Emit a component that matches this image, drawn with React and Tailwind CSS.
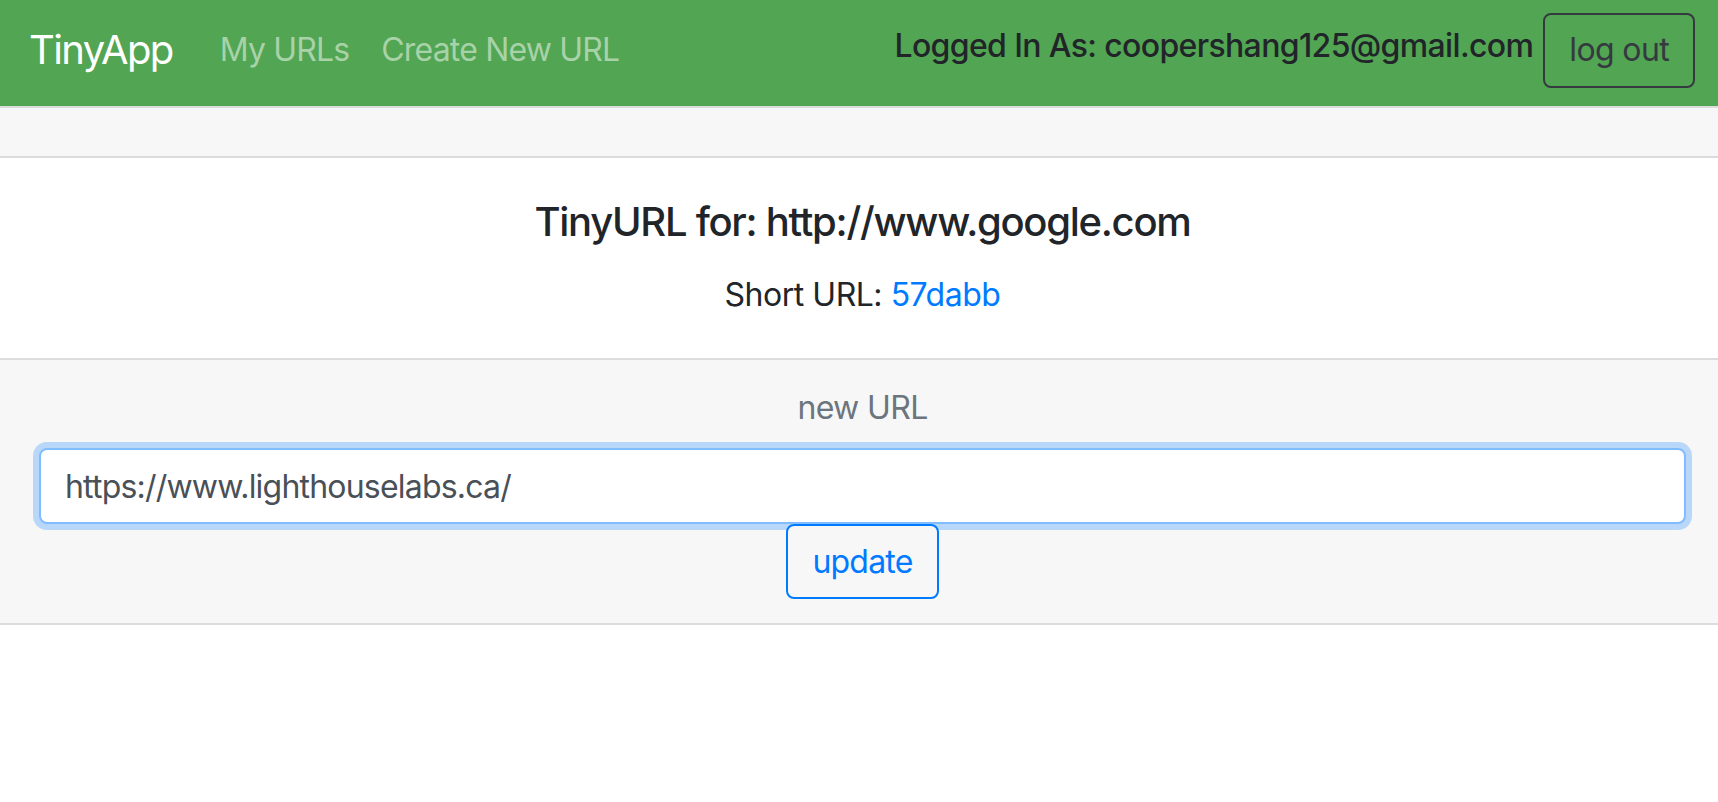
import { useState } from "react";

export default function App() {
  const [longUrl, setLongUrl] = useState("https://www.lighthouselabs.ca/");

  return (
    <div className="min-h-screen bg-white font-['Inter','Liberation_Sans',sans-serif] text-[#212529]">
      {/* top nav */}
      <nav className="h-[106px] bg-[#52a552] flex items-center pb-[6px] pl-[29px] pr-[23px]">
        <a href="#" className="text-[40px] leading-[60px] tracking-[-0.04em] text-white mr-[31px]">
          TinyApp
        </a>
        <a href="#" className="text-[32px] leading-[48px] tracking-[-0.026em] text-[#a8d2a8] px-[16px]">
          My URLs
        </a>
        <a href="#" className="text-[32px] leading-[48px] tracking-[-0.026em] text-[#a8d2a8] px-[16px]">
          Create New URL
        </a>

        <div className="ml-auto flex items-center">
          <h6 className="text-[32px] leading-[38px] tracking-[-0.02em] font-medium mb-[8px] mr-[10px]">
            Logged In As: coopershang125@gmail.com
          </h6>
          <button className="h-[75px] px-[24px] border-2 border-[#343a40] rounded-[8px] text-[32px] leading-[48px] tracking-[-0.02em] text-[#343a40]">
            log out
          </button>
        </div>
      </nav>

      {/* card */}
      <div className="border-y-2 border-[#dcdcdc]">
        <div className="h-[50px] bg-[#f7f7f7] border-b-2 border-[#dcdcdc]"></div>

        <div className="pt-[40px] pb-[39px] pl-[39px] pr-[32px] text-center">
          <h5 className="text-[40px] leading-[48px] tracking-[-0.032em] font-medium">
            TinyURL for: http://www.google.com
          </h5>
          <p className="mt-[25px] text-[32px] leading-[48px] tracking-[-0.015em]">
            Short URL:{" "}
            <a href="#" className="text-[#007bff]">
              57dabb
            </a>
          </p>
        </div>

        <form
          onSubmit={(e) => e.preventDefault()}
          className="bg-[#f7f7f7] border-t-2 border-[#dcdcdc] pt-[24px] pb-[24px] pl-[39px] pr-[32px] flex flex-col items-center"
        >
          <label className="text-[32px] leading-[48px] tracking-[-0.02em] text-[#6c757d] mb-[16px]">
            new URL
          </label>
          <input
            type="text"
            value={longUrl}
            onChange={(e) => setLongUrl(e.target.value)}
            className="w-full h-[76px] px-[24px] bg-white border-2 border-[#80bdff] rounded-[8px] text-[32px] tracking-[-0.025em] text-[#495057] outline-none shadow-[0_0_0_6px_rgba(0,123,255,0.25)]"
          />
          <button
            type="submit"
            className="relative z-10 h-[75px] px-[24px] bg-[#f7f7f7] border-2 border-[#007bff] rounded-[8px] text-[32px] leading-[48px] tracking-[-0.025em] text-[#007bff]"
          >
            update
          </button>
        </form>
      </div>
    </div>
  );
}
